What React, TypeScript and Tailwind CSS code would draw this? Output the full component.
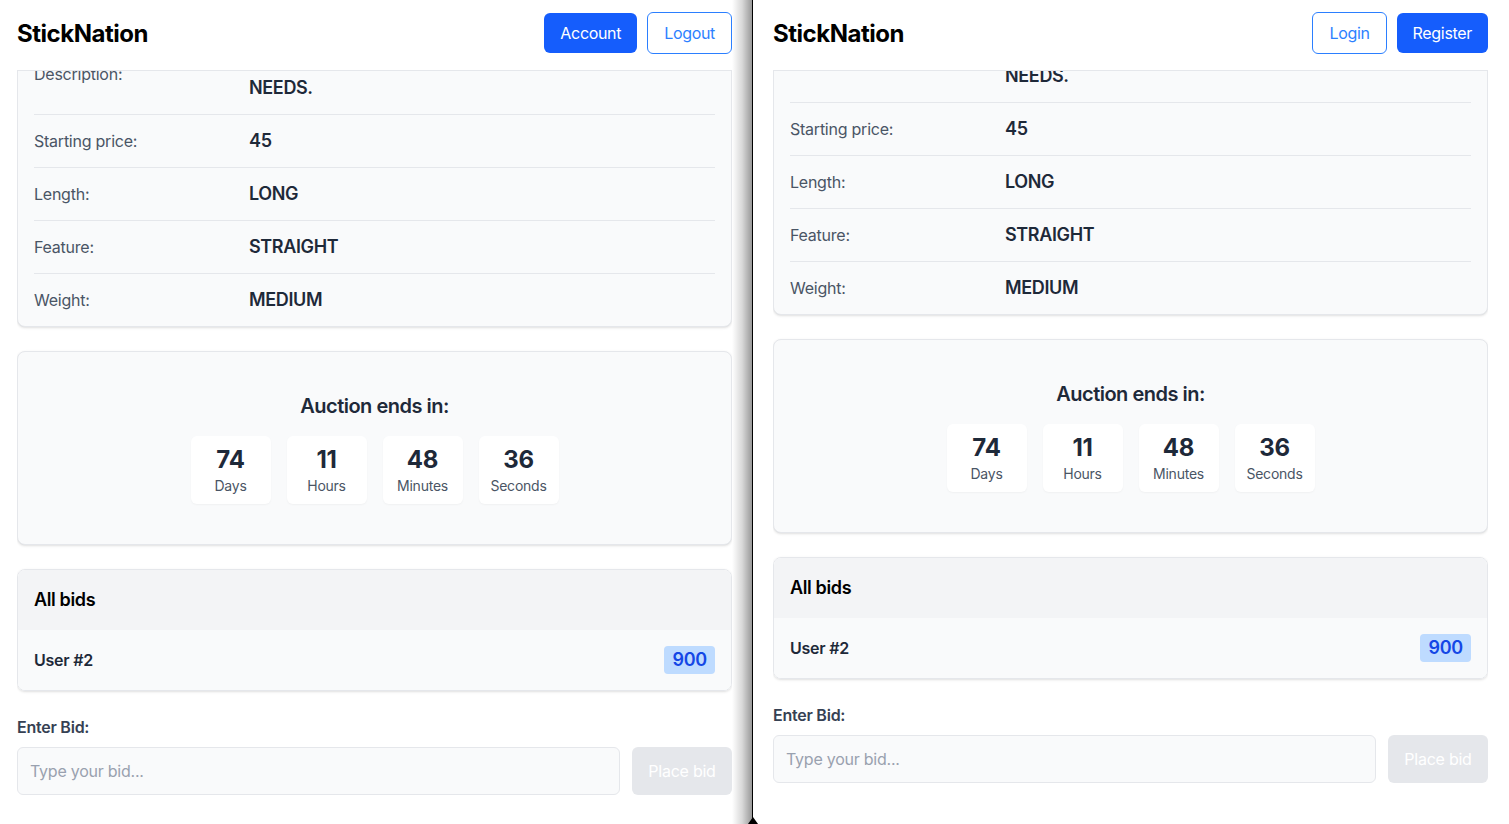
import React from 'react';

interface IDetail {
  label: string;
  value: React.ReactNode;
}

const details: IDetail[] = [
  {
    label: 'Description:',
    value: (
      <>
        <span className="block">BUILT FOR PLAYERS WHO KNOW WHAT THEY</span>
        <span className="block">NEEDS.</span>
      </>
    ),
  },
  { label: 'Starting price:', value: '45' },
  { label: 'Length:', value: 'LONG' },
  { label: 'Feature:', value: 'STRAIGHT' },
  { label: 'Weight:', value: 'MEDIUM' },
];

const countdown = [
  { value: '74', label: 'Days' },
  { value: '11', label: 'Hours' },
  { value: '48', label: 'Minutes' },
  { value: '36', label: 'Seconds' },
];

interface IPaneProps {
  loggedIn: boolean;
  offset: string;
  padding: string;
}

const Header = ({ loggedIn }: { loggedIn: boolean }) => {
  const filled = 'h-10 px-4 rounded-md bg-blue-600 text-white text-base tracking-[-0.02em]';
  const outlined = 'h-[42px] px-4 rounded-md border border-blue-500 bg-white text-blue-500 text-base tracking-[-0.02em]';

  return (
    <header className="h-[71px] shrink-0 border-b border-gray-200 pt-3 flex items-start justify-between">
      <h1 className="mt-px text-2xl font-bold text-black leading-[42px] tracking-[-0.02em]">StickNation</h1>
      <div className="flex items-center gap-2.5">
        {loggedIn ? (
          <>
            <button className={filled}>Account</button>
            <button className={outlined}>Logout</button>
          </>
        ) : (
          <>
            <button className={outlined}>Login</button>
            <button className={filled}>Register</button>
          </>
        )}
      </div>
    </header>
  );
};

const Pane = ({ loggedIn, offset, padding }: IPaneProps) => {
  return (
    <div className={`h-[824px] flex flex-col bg-white ${padding}`}>
      <Header loggedIn={loggedIn} />
      <div className="flex-1 overflow-hidden">
        <div className={offset}>
          <section className="bg-gray-50 border border-gray-200 rounded-lg shadow-sm px-4 divide-y divide-gray-200">
            {details.map((item) => (
              <div className="flex items-center py-3" key={item.label}>
                <p className="w-[215px] shrink-0 text-base text-gray-600">{item.label}</p>
                <div className="text-lg leading-7 font-semibold text-gray-800 tracking-[-0.02em]">{item.value}</div>
              </div>
            ))}
          </section>

          <section className="mt-6 bg-gray-50 border border-gray-200 rounded-lg shadow-sm p-10 flex flex-col items-center">
            <h2 className="text-xl font-semibold text-gray-800 mb-4 tracking-[-0.025em]">Auction ends in:</h2>
            <div className="flex gap-4">
              {countdown.map((item) => (
                <div className="w-20 p-2 bg-white rounded-md shadow-[0_1px_2px_rgba(0,0,0,0.04)] flex flex-col items-center" key={item.label}>
                  <span className="text-2xl font-bold text-gray-800 tracking-[-0.01em]">{item.value}</span>
                  <span className="text-sm text-gray-600">{item.label}</span>
                </div>
              ))}
            </div>
          </section>

          <section className="mt-6 border border-gray-200 rounded-lg shadow-sm overflow-hidden">
            <div className="bg-gray-100 px-4 py-4">
              <h3 className="text-lg font-semibold text-black tracking-[-0.02em]">All bids</h3>
            </div>
            <div className="bg-gray-50 px-4 py-4 flex items-center justify-between">
              <span className="text-base font-semibold text-gray-800">User #2</span>
              <span className="px-2 rounded bg-blue-200 text-blue-700 text-lg font-semibold leading-7">900</span>
            </div>
          </section>

          <p className="mt-6 mb-2 text-base font-semibold text-gray-700">Enter Bid:</p>
          <div className="flex gap-3">
            <input
              className="flex-1 h-12 px-3 bg-gray-50 border border-gray-200 rounded-md text-base tracking-[-0.015em] placeholder:text-gray-400 outline-none"
              placeholder="Type your bid..."
            />
            <button className="w-[100px] h-12 rounded-md bg-gray-200 text-white text-base">Place bid</button>
          </div>
        </div>
      </div>
    </div>
  );
};

export default function App() {
  return (
    <div className="w-[1509px] h-[824px] overflow-hidden flex font-['Inter',sans-serif] tracking-[-0.015em]">
      <div className="relative w-[752px] shrink-0">
        <Pane loggedIn={true} offset="mt-[-38px]" padding="pl-[17px] pr-5" />
        <div className="absolute top-0 right-0 bottom-0 w-[20px] bg-linear-to-r from-black/0 via-black/15 to-black/40" />
      </div>
      <div className="relative w-px shrink-0 bg-black">
        <div className="absolute bottom-0 left-1/2 -translate-x-1/2 w-0 h-0 border-x-[5px] border-x-transparent border-b-[7px] border-b-black" />
      </div>
      <div className="flex-1">
        <Pane loggedIn={false} offset="mt-[-50px]" padding="pl-5 pr-[21px]" />
      </div>
    </div>
  );
}
